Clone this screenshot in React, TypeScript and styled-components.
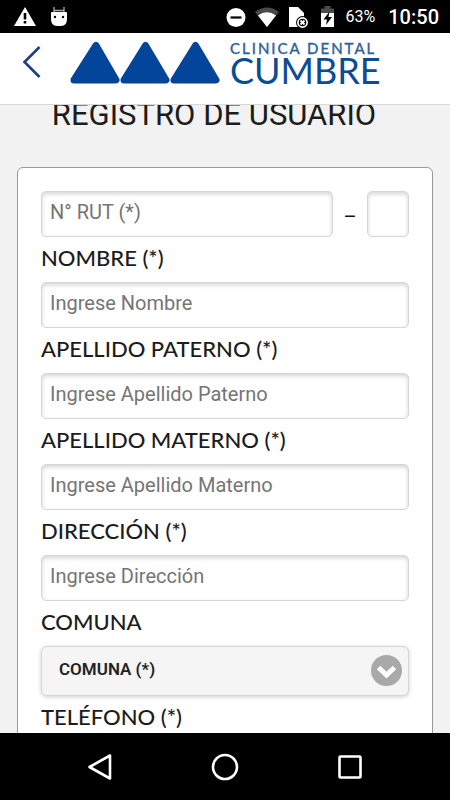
import React from 'react';
import styled, { createGlobalStyle } from 'styled-components';

const GlobalStyle = createGlobalStyle`
  *, *::before, *::after { box-sizing: border-box; }
  body { margin: 0; background: #000; font-family: Roboto, sans-serif; }
`;

const Screen = styled.div`
  display: flex;
  flex-direction: column;
  height: 100vh;
  overflow: hidden;
`;

const StatusBar = styled.div`
  flex: none;
  display: flex;
  align-items: center;
  justify-content: space-between;
  height: 33px;
  padding: 0 11px 0 14px;
  background: #000;
  color: #fff;
`;

const StatusGroup = styled.div<{ $gap: number }>`
  display: flex;
  align-items: center;
  gap: ${(p) => p.$gap}px;
  svg { display: block; }
`;

const BatteryLevel = styled.span`
  font-size: 16px;
  line-height: 20px;
`;

const Clock = styled.span`
  margin-left: 4px;
  font-size: 20px;
  line-height: 24px;
  font-weight: 500;
`;

const Header = styled.header`
  flex: none;
  display: flex;
  align-items: flex-start;
  height: 72px;
  padding: 8px 22px 0;
  background: #fff;
  border-bottom: 1px solid #d8d8d8;
`;

const BackButton = styled.button`
  display: block;
  padding: 3px 0 0;
  margin-right: 28px;
  border: 0;
  background: none;
  svg { display: block; }
`;

const Brand = styled.div`
  display: flex;
  gap: 10px;
  color: #0b4c93;
  svg { display: block; }
`;

const BrandText = styled.div`
  display: flex;
  flex-direction: column;
  font-family: Lato, sans-serif;
`;

const BrandTop = styled.span`
  font-size: 15px;
  line-height: 14px;
  letter-spacing: 2px;
  color: #2e6299;
  -webkit-text-stroke: 0.4px #2e6299;
`;

const BrandName = styled.span`
  font-size: 36px;
  line-height: 30px;
`;

const Content = styled.main`
  flex: 1;
  min-height: 0;
  overflow: hidden;
  padding: 0 17px;
  background: #f2f2f2;
`;

const Title = styled.h1`
  margin: 0 0 42px;
  padding-right: 22px;
  font-size: 31px;
  line-height: 20px;
  font-weight: 400;
  text-align: center;
  white-space: nowrap;
  color: #1c1c1c;
`;

const Card = styled.form`
  display: flex;
  flex-direction: column;
  padding: 23px;
  border: 1px solid #999;
  border-radius: 6px;
  background: #fff;
`;

const RutRow = styled.div`
  display: flex;
  align-items: center;
`;

const Dash = styled.span`
  flex: none;
  width: 34px;
  padding-top: 6px;
  text-align: center;
  font-size: 20px;
  line-height: 24px;
  color: #111;
`;

const TextInput = styled.input<{ $width?: number }>`
  ${(p) => (p.$width ? `flex: 0 0 ${p.$width}px; width: ${p.$width}px;` : 'flex: 1 1 auto; width: 100%;')}
  min-width: 0;
  height: 46px;
  padding: 0 8px 5px;
  border: 1px solid #d6d6d6;
  border-radius: 5px;
  background: #fff;
  box-shadow: inset 0 2px 4px #d4d4d4;
  font-family: Roboto, sans-serif;
  font-size: 20px;
  color: #222;
  &::placeholder { color: #757575; opacity: 1; }
`;

const Field = styled.div`
  display: flex;
  flex-direction: column;
`;

const Label = styled.label`
  padding-bottom: 3px;
  font-family: Lato, sans-serif;
  font-size: 22px;
  line-height: 42px;
  font-weight: 500;
  color: #1c1c1c;
`;

const SelectBox = styled.div`
  position: relative;
  height: 50px;
`;

const Select = styled.select`
  appearance: none;
  width: 100%;
  height: 100%;
  padding: 0 54px 5px 17px;
  border: 1px solid #d6d6d6;
  border-radius: 6px;
  background: #f5f5f5;
  box-shadow: 0 1px 4px #cfcfcf;
  font-family: Roboto, sans-serif;
  font-size: 17px;
  font-weight: 600;
  color: #222;
`;

const SelectIcon = styled.svg`
  position: absolute;
  top: 9px;
  right: 7px;
  pointer-events: none;
`;

const NavBar = styled.nav`
  flex: none;
  display: grid;
  grid-template-columns: repeat(3, 125px);
  justify-content: center;
  height: 67px;
  background: #000;
`;

const NavButton = styled.button`
  display: flex;
  align-items: center;
  justify-content: center;
  padding: 0;
  border: 0;
  background: none;
`;

const TextField = ({ id, label, placeholder }: { id: string; label: string; placeholder: string }) => (
  <Field>
    <Label htmlFor={id}>{label}</Label>
    <TextInput id={id} type="text" placeholder={placeholder} />
  </Field>
);

const fields = [
  { id: 'nombre', label: 'NOMBRE (*)', placeholder: 'Ingrese Nombre' },
  { id: 'paterno', label: 'APELLIDO PATERNO (*)', placeholder: 'Ingrese Apellido Paterno' },
  { id: 'materno', label: 'APELLIDO MATERNO (*)', placeholder: 'Ingrese Apellido Materno' },
  { id: 'direccion', label: 'DIRECCIÓN (*)', placeholder: 'Ingrese Dirección' },
];

export default function App() {
  return (
    <Screen>
      <GlobalStyle />
      <StatusBar>
        <StatusGroup $gap={14}>
          <svg width="22" height="20" viewBox="0 0 22 20">
            <path d="M11 0 22 19H0Z" fill="#fff" />
            <path d="M11 6v6.500M11 14v2.500" stroke="#000" strokeWidth="2.600" />
          </svg>
          <svg width="18" height="22" viewBox="0 0 18 22">
            <path d="M4 1v5M14 1v5M4 4.500h10" stroke="#aaa" strokeWidth="1.300" />
            <path d="M1.500 6h15q.5 0 .5 2v5q0 7-6 7H7q-6 0-6-7V8q0-2 .5-2Z" fill="#fff" />
            <circle cx="5" cy="11" r="1.200" fill="#000" />
            <circle cx="13" cy="11" r="1.200" fill="#000" />
          </svg>
        </StatusGroup>
        <StatusGroup $gap={9}>
          <svg width="20" height="20" viewBox="0 0 20 20">
            <circle cx="10" cy="10.500" r="9.500" fill="#fff" />
            <path d="M4.500 10.500h11" stroke="#000" strokeWidth="2.200" />
          </svg>
          <svg width="24" height="20" viewBox="0 0 24 20">
            <path d="M0 5Q12-4 24 5L12 20Z" fill="#4a4a4a" />
            <path d="M3 8.500Q12 2 21 8.500L12 20Z" fill="#fff" />
          </svg>
          <svg width="22" height="22" viewBox="0 0 22 22">
            <path d="M1 1h9l6 6v14H1Z" fill="#fff" />
            <circle cx="14.500" cy="16.500" r="6.500" fill="#000" />
            <circle cx="14.500" cy="16.500" r="4.600" fill="none" stroke="#fff" strokeWidth="1.700" />
            <path d="m12.500 14.500 4 4m0-4-4 4" stroke="#fff" strokeWidth="1.800" />
          </svg>
          <svg width="18" height="22" viewBox="0 0 18 22">
            <path d="M2 2.500h3.500V0h6v2.500H15V7H2Z" fill="#4a4a4a" />
            <path d="M2 7h13v14H2Z" fill="#fff" />
            <path d="m10.500 5.500-6 8H8l-1 5.500 6-8H9.500Z" fill="#000" />
          </svg>
          <BatteryLevel>63%</BatteryLevel>
          <Clock>10:50</Clock>
        </StatusGroup>
      </StatusBar>

      <Header>
        <BackButton type="button" aria-label="Volver">
          <svg width="20" height="36" viewBox="0 0 20 36">
            <path d="M17.500 3 2.500 18 17.500 33" fill="none" stroke="#1d3f86" strokeWidth="2.600" />
          </svg>
        </BackButton>
        <Brand>
          <svg width="150" height="45" viewBox="0 0 150 45">
            <g fill="#04459c" stroke="#04459c" strokeWidth="7" strokeLinejoin="round">
              <path d="M26 4.500 46 39H4Z" />
              <path d="M75.500 4.500 96 39H54Z" />
              <path d="M125.500 4.500 146 39H104Z" />
            </g>
          </svg>
          <BrandText>
            <BrandTop>CLINICA DENTAL</BrandTop>
            <BrandName>CUMBRE</BrandName>
          </BrandText>
        </Brand>
      </Header>

      <Content>
        <Title>REGISTRO DE USUARIO</Title>
        <Card>
          <RutRow>
            <TextInput type="text" aria-label="N° RUT" placeholder="N° RUT (*)" />
            <Dash>–</Dash>
            <TextInput type="text" aria-label="Dígito verificador" $width={42} />
          </RutRow>
          {fields.map((f) => (
            <TextField key={f.id} {...f} />
          ))}
          <Field>
            <Label htmlFor="comuna">COMUNA</Label>
            <SelectBox>
              <Select id="comuna" defaultValue="">
                <option value="">COMUNA (*)</option>
              </Select>
              <SelectIcon width="31" height="31" viewBox="0 0 31 31">
                <circle cx="15.500" cy="15.500" r="15.500" fill="#a9a9a9" />
                <path d="m7.500 12.500 8 7.500 8-7.500" fill="none" stroke="#fff" strokeWidth="5" />
              </SelectIcon>
            </SelectBox>
          </Field>
          <TextField id="telefono" label="TELÉFONO (*)" placeholder="Ingrese Teléfono" />
        </Card>
      </Content>

      <NavBar>
        <NavButton type="button" aria-label="Atrás">
          <svg width="26" height="28" viewBox="0 0 26 28">
            <path d="M23 2.500v23L2.500 14Z" fill="none" stroke="#fff" strokeWidth="2.600" strokeLinejoin="round" />
          </svg>
        </NavButton>
        <NavButton type="button" aria-label="Inicio">
          <svg width="28" height="28" viewBox="0 0 28 28">
            <circle cx="14" cy="14" r="12" fill="none" stroke="#fff" strokeWidth="2.600" />
          </svg>
        </NavButton>
        <NavButton type="button" aria-label="Recientes">
          <svg width="24" height="24" viewBox="0 0 24 24">
            <rect x="1.500" y="1.500" width="21" height="21" rx="1" fill="none" stroke="#fff" strokeWidth="2.600" />
          </svg>
        </NavButton>
      </NavBar>
    </Screen>
  );
}
